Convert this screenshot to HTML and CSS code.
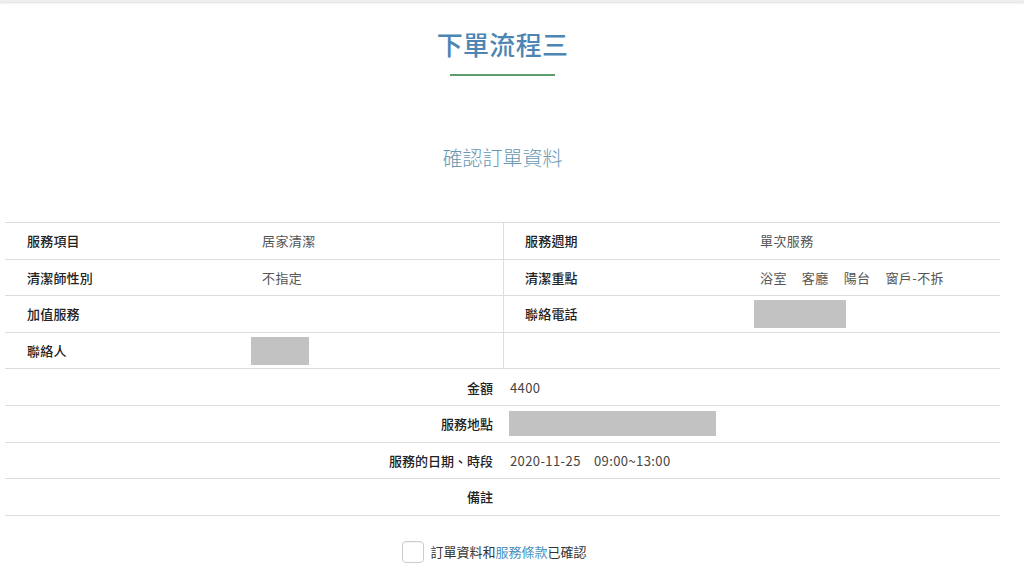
FILE: index.html
```html
<!DOCTYPE html>
<html lang="zh-Hant">
<head>
    <meta charset="UTF-8">
    <title>下單流程三</title>
    <link rel="stylesheet" href="styles.css">
</head>
<body>
    <div class="topbar"></div>

    <div class="page">
        <header class="step-title">
            <h1>下單流程三</h1>
            <div class="title-line"></div>
        </header>

        <h2 class="sub-title">確認訂單資料</h2>

        <!-- 訂單資料 -->
        <div class="order-table">
            <div class="row half">
                <div class="cell">
                    <span class="label">服務項目</span>
                    <span class="value">居家清潔</span>
                </div>
                <div class="cell right">
                    <span class="label">服務週期</span>
                    <span class="value">單次服務</span>
                </div>
            </div>
            <div class="row half">
                <div class="cell">
                    <span class="label">清潔師性別</span>
                    <span class="value">不指定</span>
                </div>
                <div class="cell right">
                    <span class="label">清潔重點</span>
                    <span class="value tags"><span>浴室</span><span>客廳</span><span>陽台</span><span>窗戶-不拆</span></span>
                </div>
            </div>
            <div class="row half">
                <div class="cell">
                    <span class="label">加值服務</span>
                    <span class="value"></span>
                </div>
                <div class="cell right">
                    <span class="label">聯絡電話</span>
                    <span class="value"><span class="mask mask-phone"></span></span>
                </div>
            </div>
            <div class="row half">
                <div class="cell">
                    <span class="label">聯絡人</span>
                    <span class="value"><span class="mask mask-name"></span></span>
                </div>
                <div class="cell right"></div>
            </div>
            <div class="row full">
                <span class="label">金額</span>
                <span class="value">4400</span>
            </div>
            <div class="row full">
                <span class="label">服務地點</span>
                <span class="value"><span class="mask mask-address"></span></span>
            </div>
            <div class="row full">
                <span class="label">服務的日期、時段</span>
                <span class="value">2020-11-25&nbsp;&nbsp;&nbsp;&nbsp;09:00~13:00</span>
            </div>
            <div class="row full">
                <span class="label">備註</span>
                <span class="value"></span>
            </div>
        </div>

        <label class="confirm">
            <span class="checkbox"></span>
            <span>訂單資料和<a href="#">服務條款</a>已確認</span>
        </label>
    </div>
</body>
</html>
```

FILE: styles.css
```css
body {
    margin: 0;
    padding: 0;
    background: #fff;
    font-family: "Noto Sans CJK TC", "Liberation Sans", sans-serif;
    color: #333;
    height: 575px;
    overflow: hidden;
}
.topbar {
    height: 2px;
    background: #eee;
    box-shadow: 0 1px 2px rgba(0, 0, 0, 0.15);
}
.page {
    margin: 0 24px 0 5px;
}
.step-title {
    text-align: center;
    padding-top: 23px;
}
.step-title h1 {
    margin: 0;
    font-size: 26px;
    font-weight: 500;
    line-height: 38px;
    color: #4d86b3;
    letter-spacing: 0.3px;
}
.title-line {
    width: 105px;
    height: 2px;
    margin: 11px auto 0;
    background: #5d9d6c;
}
.sub-title {
    margin: 68px 0 0;
    text-align: center;
    font-size: 20px;
    font-weight: 300;
    line-height: 28px;
    color: #6598b2;
}
.order-table {
    margin-top: 50px;
    border-top: 1px solid #ddd;
    font-size: 13px;
}
.row {
    display: flex;
    height: 35.6px;
    border-bottom: 1px solid #ddd;
}
.half .cell {
    flex: 0 0 498px;
    display: flex;
    align-items: center;
}
.half .cell.right {
    flex: 1;
    border-left: 1px solid #ddd;
}
.half .label {
    width: 235px;
    padding-left: 22px;
}
.half .cell.right .label {
    padding-left: 21px;
}
.label {
    color: #222;
    font-weight: 500;
    letter-spacing: 0.2px;
}
.value {
    color: #555;
    letter-spacing: 0.4px;
}
.tags span {
    margin-right: 15px;
}
.mask {
    display: inline-block;
    background: #c2c2c2;
    vertical-align: middle;
}
.mask-name {
    width: 58px;
    height: 28px;
    margin-left: -11px;
}
.mask-phone {
    width: 92px;
    height: 28px;
    margin-left: -6px;
}
.full {
    align-items: center;
}
.full .label {
    width: 488px;
    text-align: right;
    letter-spacing: 0;
}
.full .value {
    padding-left: 17px;
    color: #444;
}
.mask-address {
    width: 207px;
    height: 25px;
    margin-left: -1px;
}
.confirm {
    display: flex;
    align-items: center;
    justify-content: center;
    margin: 25px 0 0 -16px;
    font-size: 13px;
    color: #333;
}
.checkbox {
    width: 20px;
    height: 20px;
    border: 1px solid #ccc;
    border-radius: 4px;
    margin-right: 6px;
    box-shadow: inset 0 1px 1px rgba(0, 0, 0, 0.05);
}
.confirm a {
    color: #4a8fbd;
    text-decoration: none;
}
```
